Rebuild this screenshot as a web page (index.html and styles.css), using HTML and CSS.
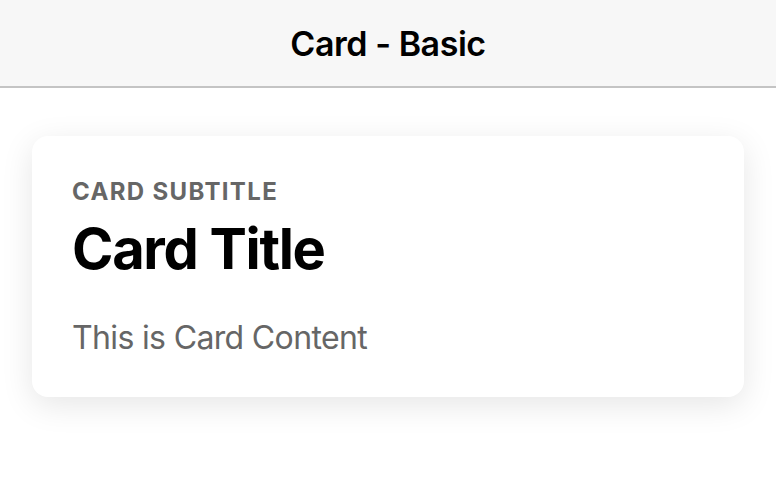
FILE: index.html
```html
<!DOCTYPE html>
<html>
<head>
<meta charset="utf-8">
<link rel="stylesheet" href="styles.css">
</head>
<body>
<header class="toolbar">
  <h1 class="toolbar-title">Card - Basic</h1>
</header>
<main class="content">
  <section class="card">
    <div class="card-header">
      <div class="card-subtitle">Card Subtitle</div>
      <div class="card-title">Card Title</div>
    </div>
    <div class="card-content">This is Card Content</div>
  </section>
</main>
</body>
</html>
```

FILE: styles.css
```css
html, body {
  margin: 0;
  padding: 0;
  background: #ffffff;
  font-family: Inter, "Noto Sans", sans-serif;
}
.toolbar {
  height: 86px;
  background: #f7f7f7;
  border-bottom: 2px solid #c4c4c4;
  display: flex;
  align-items: center;
  justify-content: center;
}
.toolbar-title {
  margin: 0;
  font-size: 34px;
  font-weight: 600;
  color: #000;
  letter-spacing: -0.45px;
}
.content {
  padding: 48px 32px;
}
.card {
  background: #fff;
  border-radius: 16px;
  box-shadow: 0 8px 32px rgba(0, 0, 0, 0.1);
  padding: 41px 40px 38px;
}
.card-subtitle {
  font-size: 24px;
  line-height: 29px;
  font-weight: 700;
  letter-spacing: 1.35px;
  text-transform: uppercase;
  color: #666666;
  margin-bottom: 10px;
}
.card-title {
  font-size: 56px;
  line-height: 67px;
  font-weight: 700;
  letter-spacing: -1.3px;
  color: #000;
}
.card-content {
  margin-top: 34px;
  font-size: 32px;
  line-height: 42px;
  letter-spacing: -0.65px;
  color: #666666;
}
```
